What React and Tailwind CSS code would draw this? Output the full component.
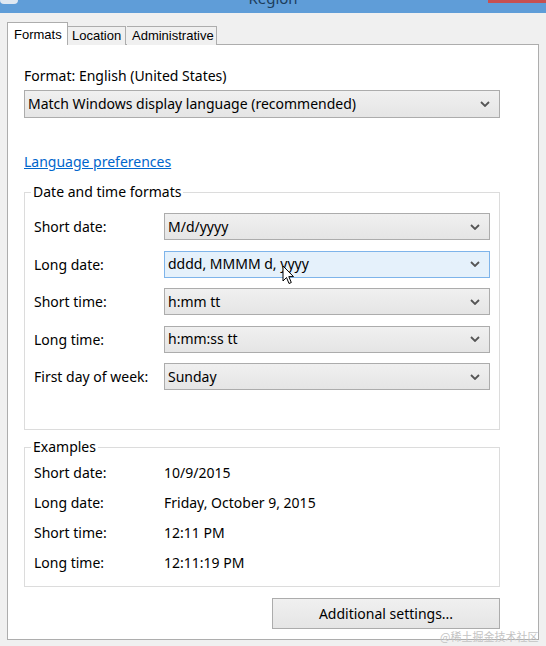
import React from 'react';

const ui = { fontFamily: '"Segoe UI", "Noto Sans", "Open Sans", sans-serif' };

function Chevron() {
  return (
    <svg width="10" height="6" viewBox="0 0 10 6" className="shrink-0">
      <polyline points="1,1 5,5 9,1" fill="none" stroke="#555" strokeWidth="1.8" />
    </svg>
  );
}

function Select({ value, hover, className = '' }) {
  return (
    <div
      className={
        'flex items-center justify-between pl-[3px] pr-[9px] border ' +
        (hover
          ? 'border-[#7eb4ea] bg-[#e5f1fb] '
          : 'border-[#acacac] bg-gradient-to-b from-[#f0f0f0] to-[#e5e5e5] ') +
        className
      }
    >
      <span className="text-[14px] text-black leading-none">{value}</span>
      <Chevron />
    </div>
  );
}

function Cursor() {
  return (
    <svg width="13" height="21" viewBox="0 0 13 21" className="absolute left-[282px] top-[265px]">
      <path
        d="M1 1 L1 16 L4.5 12.5 L7 18.5 L9.3 17.5 L6.8 11.6 L11.5 11.6 Z"
        fill="#fff"
        stroke="#000"
        strokeWidth="1"
        strokeLinejoin="round"
      />
    </svg>
  );
}

const formats = [
  ['Short date:', 'M/d/yyyy'],
  ['Long date:', 'dddd, MMMM d, yyyy', true],
  ['Short time:', 'h:mm tt'],
  ['Long time:', 'h:mm:ss tt'],
  ['First day of week:', 'Sunday'],
];

const examples = [
  ['Short date:', '10/9/2015'],
  ['Long date:', 'Friday, October 9, 2015'],
  ['Short time:', '12:11 PM'],
  ['Long time:', '12:11:19 PM'],
];

export default function App() {
  return (
    <div className="relative w-[546px] h-[646px] overflow-hidden bg-[#f0f0f0]" style={ui}>
      {/* title bar, top cut off */}
      <div className="relative h-[13px] bg-[#5f9dd8] flex justify-center overflow-hidden">
        <div className="absolute left-0 top-0 w-[18px] h-[4px] rounded-b-full bg-[#dfe8f2]" />
        <span className="text-[15px] leading-none text-[#1d3d5c] -mt-[9px]">Region</span>
        <div className="absolute right-0 top-0 w-[58px] h-[3px] bg-[#c75050]" />
      </div>

      {/* tabs */}
      <div
        className="flex items-end ml-[7px] mt-[9px] h-[23px] text-[13px] text-black"
        style={{ fontFamily: '"Liberation Sans", Arial, sans-serif' }}
      >
        <div className="relative z-10 h-[23px] w-[61px] bg-white border border-b-0 border-[#adadad] pl-[6px] pt-[2px]">
          Formats
        </div>
        <div className="h-[19px] w-[58px] bg-[#f0f0f0] border border-b-0 border-l-0 border-[#adadad] pl-[4px] leading-[17px]">
          Location
        </div>
        <div className="h-[19px] w-[90px] bg-[#f0f0f0] border border-b-0 border-l-0 border-[#adadad] pl-[5px] leading-[17px] ml-[1px]">
          Administrative
        </div>
      </div>

      {/* panel */}
      <div className="mx-[7px] -mt-[1px] h-[596px] bg-white border border-[#adadad] px-[16px] text-[14px] text-black">
        <div className="pt-[22px] leading-[18px]">Format: English (United States)</div>
        <Select value="Match Windows display language (recommended)" className="mt-[5px] h-[28px] w-[476px]" />
        <div className="mt-[35px] leading-[18px] text-[#0066cc] underline">Language preferences</div>

        <fieldset className="mt-[13px] h-[246px] w-[476px] border border-[#dcdcdc] px-[9px] pt-[13px]">
          <legend className="px-[2px] -ml-[3px] leading-[16px]">Date and time formats</legend>
          <div className="grid grid-cols-[130px_326px] gap-y-[10.5px] items-center">
            {formats.map(([label, value, hover]) => (
              <React.Fragment key={label}>
                <span>{label}</span>
                <Select value={value} hover={hover} className="h-[27px]" />
              </React.Fragment>
            ))}
          </div>
        </fieldset>

        <fieldset className="mt-[9px] h-[148px] w-[476px] border border-[#dcdcdc] px-[9px] pt-[2px]">
          <legend className="px-[2px] -ml-[3px] leading-[16px]">Examples</legend>
          <div className="grid grid-cols-[130px_1fr] auto-rows-[30px] items-center">
            {examples.map(([label, value]) => (
              <React.Fragment key={label}>
                <span>{label}</span>
                <span>{value}</span>
              </React.Fragment>
            ))}
          </div>
        </fieldset>

        <div className="flex justify-end w-[476px] mt-[11px]">
          <div className="h-[31px] w-[228px] flex items-center justify-center border border-[#acacac] bg-gradient-to-b from-[#f0f0f0] to-[#e5e5e5]">
            Additional settings...
          </div>
        </div>
      </div>

      <Cursor />
      <span
        className="absolute left-[440px] top-[631px] text-[11px] leading-none text-[#c4c4c4] whitespace-nowrap"
        style={{ fontFamily: '"Noto Sans CJK SC", sans-serif' }}
      >
        @稀土掘金技术社区
      </span>
    </div>
  );
}
